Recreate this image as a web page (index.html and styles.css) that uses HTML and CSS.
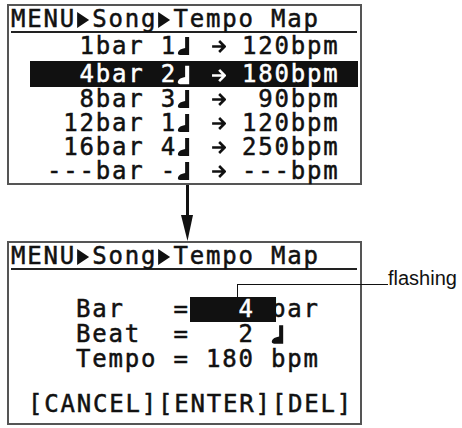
FILE: index.html
```
<!DOCTYPE html>
<html>
<head>
<meta charset="utf-8">
<link rel="stylesheet" href="styles.css">
</head>
<body>
<div class="page">
  <section class="lcd lcd-list">
    <div class="lcd-head">MENU<svg class="g tri" viewBox="0 0 16 24"><polygon points="1,5 13,13 1,21"/></svg>Song<svg class="g tri" viewBox="0 0 16 24"><polygon points="1,5 13,13 1,21"/></svg>Tempo Map</div>
    <div class="rows">
      <div class="row">  1bar 1<svg class="g note" viewBox="0 0 16 24"><path d="M8 3H12V21H3Q0 21 1 18Q2 15 8 14Z"/></svg> <svg class="g arr" viewBox="0 0 16 24"><path d="M2 12.5H14.5M9 7L14.5 12.5L9 18"/></svg> 120bpm</div>
      <div class="row row-sel">  4bar 2<svg class="g note" viewBox="0 0 16 24"><path d="M8 3H12V21H3Q0 21 1 18Q2 15 8 14Z"/></svg> <svg class="g arr" viewBox="0 0 16 24"><path d="M2 12.5H14.5M9 7L14.5 12.5L9 18"/></svg> 180bpm</div>
      <div class="row">  8bar 3<svg class="g note" viewBox="0 0 16 24"><path d="M8 3H12V21H3Q0 21 1 18Q2 15 8 14Z"/></svg> <svg class="g arr" viewBox="0 0 16 24"><path d="M2 12.5H14.5M9 7L14.5 12.5L9 18"/></svg>  90bpm</div>
      <div class="row"> 12bar 1<svg class="g note" viewBox="0 0 16 24"><path d="M8 3H12V21H3Q0 21 1 18Q2 15 8 14Z"/></svg> <svg class="g arr" viewBox="0 0 16 24"><path d="M2 12.5H14.5M9 7L14.5 12.5L9 18"/></svg> 120bpm</div>
      <div class="row"> 16bar 4<svg class="g note" viewBox="0 0 16 24"><path d="M8 3H12V21H3Q0 21 1 18Q2 15 8 14Z"/></svg> <svg class="g arr" viewBox="0 0 16 24"><path d="M2 12.5H14.5M9 7L14.5 12.5L9 18"/></svg> 250bpm</div>
      <div class="row">---bar -<svg class="g note" viewBox="0 0 16 24"><path d="M8 3H12V21H3Q0 21 1 18Q2 15 8 14Z"/></svg> <svg class="g arr" viewBox="0 0 16 24"><path d="M2 12.5H14.5M9 7L14.5 12.5L9 18"/></svg> ---bpm</div>
    </div>
  </section>

  <svg class="down-arrow" viewBox="0 0 200 56"><rect x="179" y="0" width="3" height="32"/><polygon points="174,30 186,30 180.5,56"/></svg>

  <section class="lcd lcd-edit">
    <div class="lcd-head">MENU<svg class="g tri" viewBox="0 0 16 24"><polygon points="1,5 13,13 1,21"/></svg>Song<svg class="g tri" viewBox="0 0 16 24"><polygon points="1,5 13,13 1,21"/></svg>Tempo Map</div>
    <div class="fields">
      <div class="field">Bar   =<span class="value-box">   4 </span>bar</div>
      <div class="field">Beat  =   2 <svg class="g note" viewBox="0 0 16 24"><path d="M8 3H12V21H3Q0 21 1 18Q2 15 8 14Z"/></svg></div>
      <div class="field">Tempo = 180 bpm</div>
    </div>
    <div class="keys">[CANCEL][ENTER][DEL]</div>
    <div class="callout-line"></div>
    <div class="callout-text">flashing</div>
  </section>
</div>
</body>
</html>
```
FILE: styles.css
```
html, body {
  margin: 0;
  padding: 0;
  background: #fff;
}

.page {
  padding: 4px 0 0 7px;
  font-family: "DejaVu Sans Mono", monospace;
  font-weight: normal;
  font-size: 24px;
  letter-spacing: 1.8px;
  color: #111;
  -webkit-text-stroke: 0.5px currentColor;
}

.lcd {
  box-sizing: border-box;
  width: 355px;
  border: 2px solid #555;
  background: #fff;
}

.lcd-head {
  margin: 0 3px 0 2px;
  padding-top: 1px;
  height: 24px;
  line-height: 24px;
  border-bottom: 2px solid #222;
  white-space: pre;
}

.g {
  display: inline-block;
  width: 16.25px;
  height: 24px;
  vertical-align: top;
  fill: currentColor;
}

.arr {
  fill: none;
  stroke: currentColor;
  stroke-width: 2.6;
}

.rows {
  padding-top: 1px;
}

.row {
  height: 24px;
  line-height: 24px;
  padding-left: 38px;
  white-space: pre;
}

.row-sel {
  margin: 3px 2px 0 21px;
  padding-left: 17px;
  height: 26px;
  line-height: 26px;
  background: #111;
  color: #fff;
}

.row-sel .g {
  height: 26px;
  margin-top: 1px;
}

.down-arrow {
  display: block;
  width: 200px;
  height: 56px;
  fill: #111;
}

.lcd-edit {
  position: relative;
  padding-bottom: 7px;
}

.fields {
  margin-top: 27px;
  padding-left: 67px;
}

.field {
  height: 25px;
  line-height: 25px;
  white-space: pre;
}

.field .g {
  height: 25px;
}

.value-box {
  display: inline-block;
  height: 25px;
  line-height: 25px;
  background: #111;
  color: #fff;
  padding-right: 5px;
  margin-right: -5px;
  vertical-align: top;
}

.keys {
  margin-top: 20px;
  padding-left: 19px;
  height: 24px;
  line-height: 24px;
  white-space: pre;
}

.callout-line {
  position: absolute;
  left: 228px;
  top: 41px;
  width: 150px;
  height: 13px;
  border-top: 1px solid #111;
  border-left: 1px solid #111;
}

.callout-text {
  position: absolute;
  left: 379px;
  top: 25px;
  font-family: "Liberation Sans", Arial, sans-serif;
  font-weight: normal;
  font-size: 20px;
  line-height: 20px;
  letter-spacing: 0;
  white-space: nowrap;
  color: #111;
  -webkit-text-stroke: 0;
}
```
